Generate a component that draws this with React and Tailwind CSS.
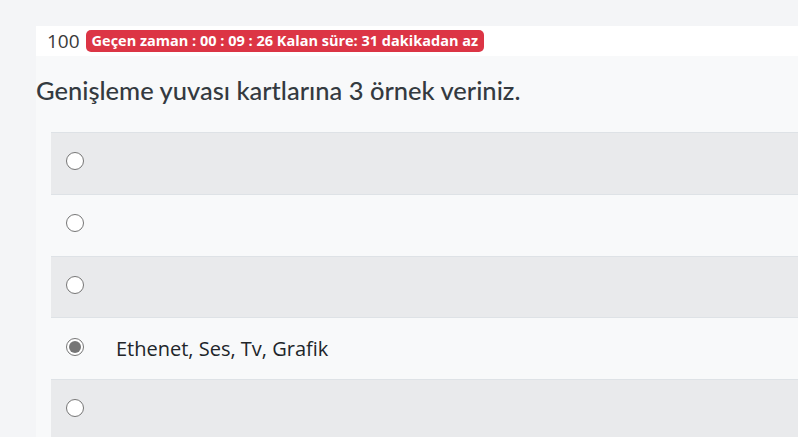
import React from 'react';

const options = [
  { text: '', checked: false },
  { text: '', checked: false },
  { text: '', checked: false },
  { text: 'Ethenet, Ses, Tv, Grafik', checked: true },
  { text: '', checked: false },
];

function Radio({ checked }) {
  return (
    <span className="mb-[4px] flex h-[18px] w-[18px] shrink-0 items-center justify-center rounded-full border border-[#767676] bg-white">
      {checked && <span className="h-[12px] w-[12px] rounded-full bg-[#767676]" />}
    </span>
  );
}

export default function App() {
  return (
    <div className="h-[437px] w-[798px] overflow-hidden bg-[#f4f5f7] pl-[36px] pt-[26px] font-['Open_Sans',sans-serif]">
      <div className="h-full bg-[#f8f9fa]">
        <div className="flex h-[30px] items-center gap-[6px] bg-white pl-[11px]">
          <span className="text-[19px] leading-none text-[#3a3a3a]">100</span>
          <span className="rounded-[5px] bg-[#dc3545] px-[6px] py-[3px] text-[14.5px] font-bold leading-[16px] text-white">
            Geçen zaman : 00 : 09 : 26 Kalan süre: 31 dakikadan az
          </span>
        </div>
        <h2 className="mt-[19px] font-['Lato',sans-serif] text-[25.5px] font-medium leading-[30px] text-[#343a40]">
          Genişleme yuvası kartlarına 3 örnek veriniz.
        </h2>
        <ul className="ml-[15px] mt-[27px] border-t border-[#dee2e6]">
          {options.map((o, i) => (
            <li
              key={i}
              className={`flex h-[61.75px] items-center border-b border-[#dee2e6] pl-[15px] ${i % 2 === 0 ? 'bg-[#e9eaec]' : 'bg-[#f8f9fa]'}`}
            >
              <Radio checked={o.checked} />
              <span className="ml-[32px] text-[20px] text-[#212529]">{o.text}</span>
            </li>
          ))}
        </ul>
      </div>
    </div>
  );
}
